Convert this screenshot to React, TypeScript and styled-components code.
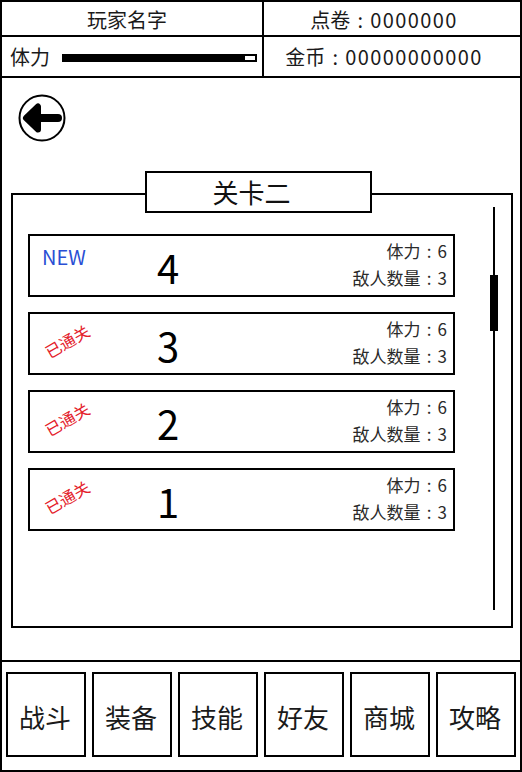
import React from 'react';
import styled, { createGlobalStyle } from 'styled-components';

const GlobalStyle = createGlobalStyle`
  html, body {
    margin: 0;
    padding: 0;
    background: #fff;
  }
  body {
    font-family: "Noto Sans CJK SC", "Noto Sans", sans-serif;
    color: #111;
  }
  * { box-sizing: border-box; }
`;

const Frame = styled.div`
  width: 522px;
  height: 772px;
  border: 2px solid #000;
  display: flex;
  flex-direction: column;
`;

const Header = styled.div`
  display: grid;
  grid-template-columns: 262px 1fr;
  grid-template-rows: 35px 41px;
`;

const HeaderCell = styled.div<{ $left?: boolean; $center?: boolean; $top?: boolean }>`
  border-bottom: 2px solid #000;
  border-right: ${p => (p.$left ? '2px solid #000' : 'none')};
  display: flex;
  align-items: center;
  justify-content: ${p => (p.$center ? 'center' : 'flex-start')};
  padding: ${p => (p.$center ? (p.$left ? '0 10px 0 0' : '0 16px 0 0') : '0 0 0 8px')};
  padding-top: ${p => (p.$top ? '3px' : '0')};
  font-size: 20px;
  line-height: 1;
  color: #1a1a1a;
`;

const Colon = styled.span`
  display: inline-block;
  width: 1em;
  text-align: center;
`;

const Digits = styled.span`
  letter-spacing: 1.4px;
`;

const StaminaLabel = styled.span`
  margin-right: 12px;
`;

const StaminaBar = styled.div`
  width: 195px;
  height: 8px;
  border: 2px solid #000;
  background: #fff;
  margin-top: 2px;
`;

const StaminaFill = styled.div`
  height: 100%;
  background: #000;
`;

const Main = styled.div`
  flex: 1;
  border-bottom: 2px solid #000;
  padding: 16px 7px 0 9px;
  display: flex;
  flex-direction: column;
`;

const BackButton = styled.button`
  width: 48px;
  height: 48px;
  margin: 0 0 0 7px;
  padding: 0;
  border: none;
  background: none;
  display: block;
  svg { display: block; }
`;

const Panel = styled.div`
  margin-top: 51px;
  height: 435px;
  border: 2px solid #000;
  display: flex;
`;

const PanelBody = styled.div`
  display: flex;
  flex-direction: column;
`;

const PanelTitle = styled.div`
  margin: -24px 0 0 132px;
  width: 227px;
  height: 42px;
  border: 2px solid #000;
  background: #fff;
  display: flex;
  align-items: center;
  justify-content: center;
  padding-right: 14px;
  font-size: 26px;
  line-height: 1;
  color: #111;
`;

const LevelList = styled.div`
  margin: 21px 0 0 15px;
  width: 427px;
  display: flex;
  flex-direction: column;
  gap: 15px;
`;

const LevelCard = styled.div`
  height: 63px;
  border: 2px solid #000;
  display: flex;
`;

const BadgeSlot = styled.div`
  width: 127px;
  height: 42px;
  padding-left: 12px;
  display: flex;
  align-items: center;
`;

const Badge = styled.span<{ $passed?: boolean }>`
  display: inline-block;
  font-size: ${p => (p.$passed ? '16px' : '20px')};
  line-height: 1;
  color: ${p => (p.$passed ? '#e4202a' : '#2a4fd4')};
  transform: ${p => (p.$passed ? 'translate(1px, 6px) rotate(-30deg)' : 'none')};
`;

const LevelNumber = styled.div`
  align-self: center;
  font-size: 40px;
  line-height: 1;
  color: #000;
  margin-top: 2px;
`;

const Stats = styled.div`
  margin-left: auto;
  padding: 1px 6px 0 0;
  font-size: 17px;
  line-height: 27px;
  text-align: right;
  color: #2a2a2a;
`;

const ScrollCol = styled.div`
  margin-left: auto;
  padding: 12px 16px 16px 0;
  display: flex;
`;

const ScrollTrack = styled.div`
  width: 2px;
  background: #000;
  position: relative;
`;

const ScrollThumb = styled.div`
  position: absolute;
  top: 68px;
  left: -3px;
  width: 8px;
  height: 56px;
  background: #000;
`;

const Nav = styled.div`
  height: 108px;
  padding: 10px 4px 13px;
  display: flex;
  gap: 6px;
`;

const NavButton = styled.button`
  flex: 1;
  height: 85px;
  border: 2px solid #000;
  background: #fff;
  padding: 4px 2px 0 0;
  font-family: inherit;
  font-size: 26px;
  line-height: 1;
  color: #1a1a1a;
  display: flex;
  align-items: center;
  justify-content: center;
`;

type Level = { num: number; status: 'new' | 'passed'; stamina: number; enemies: number };

const levels: Level[] = [
  { num: 4, status: 'new', stamina: 6, enemies: 3 },
  { num: 3, status: 'passed', stamina: 6, enemies: 3 },
  { num: 2, status: 'passed', stamina: 6, enemies: 3 },
  { num: 1, status: 'passed', stamina: 6, enemies: 3 },
];

const tabs = ['战斗', '装备', '技能', '好友', '商城', '攻略'];

const BackIcon = () => (
  <svg width="48" height="48" viewBox="0 0 48 48">
    <circle cx="24" cy="24" r="22.5" fill="#fff" stroke="#000" strokeWidth="2" />
    <line x1="17" y1="24" x2="40" y2="24" stroke="#000" strokeWidth="8" strokeLinecap="round" />
    <polygon points="8,24 20,12.5 20,35.5" fill="#000" stroke="#000" strokeWidth="6" strokeLinejoin="round" />
  </svg>
);

export default function App() {
  return (
    <>
      <GlobalStyle />
      <Frame>
        <Header>
          <HeaderCell $left $center $top>玩家名字</HeaderCell>
          <HeaderCell $center $top>点卷<Colon>:</Colon><Digits>0000000</Digits></HeaderCell>
          <HeaderCell $left>
            <StaminaLabel>体力</StaminaLabel>
            <StaminaBar>
              <StaminaFill style={{ width: '95%' }} />
            </StaminaBar>
          </HeaderCell>
          <HeaderCell $center>金币<Colon>:</Colon><Digits>00000000000</Digits></HeaderCell>
        </Header>
        <Main>
          <BackButton aria-label="返回">
            <BackIcon />
          </BackButton>
          <Panel>
            <PanelBody>
              <PanelTitle>关卡二</PanelTitle>
              <LevelList>
                {levels.map(l => (
                  <LevelCard key={l.num}>
                    <BadgeSlot>
                      {l.status === 'new' ? <Badge>NEW</Badge> : <Badge $passed>已通关</Badge>}
                    </BadgeSlot>
                    <LevelNumber>{l.num}</LevelNumber>
                    <Stats>
                      <div>体力<Colon>:</Colon>{l.stamina}</div>
                      <div>敌人数量<Colon>:</Colon>{l.enemies}</div>
                    </Stats>
                  </LevelCard>
                ))}
              </LevelList>
            </PanelBody>
            <ScrollCol>
              <ScrollTrack>
                <ScrollThumb />
              </ScrollTrack>
            </ScrollCol>
          </Panel>
        </Main>
        <Nav>
          {tabs.map(t => (
            <NavButton key={t}>{t}</NavButton>
          ))}
        </Nav>
      </Frame>
    </>
  );
}
